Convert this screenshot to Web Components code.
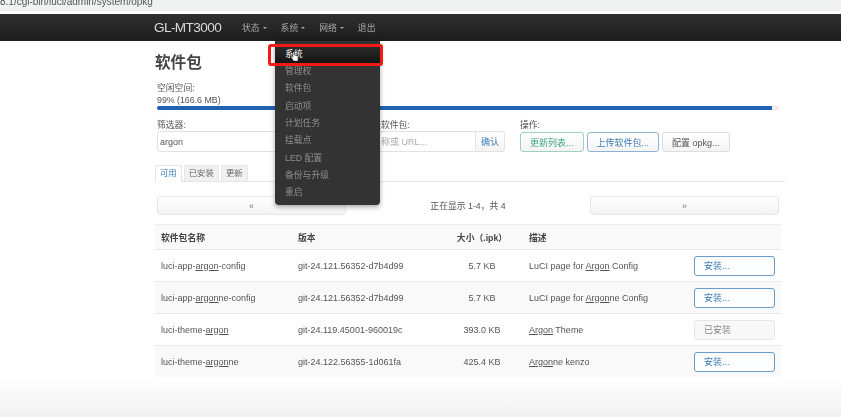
<!DOCTYPE html>
<html lang="zh">
<head>
<meta charset="utf-8">
<title>软件包</title>
<style>
  html, body { margin: 0; height: 100%; }
  body {
    width: 841px;
    height: 417px;
    overflow: hidden;
    font-family: "Liberation Sans", "Noto Sans CJK SC", sans-serif;
    font-size: 8.8px;
    color: #444;
    background: linear-gradient(#fff 376px, #f1f1f1 417px);
    filter: blur(0.3px);
  }
</style>
</head>
<body>
<url-bar>8.1/cgi-bin/luci/admin/system/opkg</url-bar>
<nav-bar brand="GL-MT3000"></nav-bar>
<pkg-page></pkg-page>

<script>
// small button used everywhere on the page
class UiButton extends HTMLElement {
  constructor() {
    super();
    this.attachShadow({ mode: 'open' }).innerHTML = `
      <style>
        :host {
          display: flex;
          box-sizing: border-box;
          align-items: center;
          justify-content: center;
          height: 20px;
          padding: 0 9px;
          border: 1px solid #dcdcdc;
          border-radius: 3px;
          background: linear-gradient(#fff, #f4f4f4);
          color: #555;
          white-space: nowrap;
        }
        :host([kind="add"]) { border-color: #9fd0c0; color: #3aa57e; }
        :host([kind="blue"]) { border-color: #8fb2d6; color: #3f7cb8; }
        :host([kind="install"]) { border-color: #6d9ac8; color: #3f7cb8; justify-content: flex-start; background: linear-gradient(#f8fbfe, #fff); }
        :host([kind="done"]) { border-color: #e6e6e6; color: #888; justify-content: flex-start; background: #f8f8f8; }
        :host([kind="plain"]) { border-color: #e6e6e6; color: #777; }
      </style>
      <slot></slot>`;
  }
}
customElements.define('ui-button', UiButton);

class UrlBar extends HTMLElement {
  constructor() {
    super();
    this.attachShadow({ mode: 'open' }).innerHTML = `
      <style>
        :host {
          display: flex;
          align-items: flex-end;
          height: 11px;
          margin-bottom: 3px;
          overflow: hidden;
          background: #f0f1f1;
          color: #555;
          font-size: 10px;
          line-height: 16px;
          white-space: nowrap;
        }
        div { margin-bottom: 1px; }
      </style>
      <div><slot></slot></div>`;
  }
}
customElements.define('url-bar', UrlBar);

// dropdown under the 系统 entry, the first line is the hovered one
class DropMenu extends HTMLElement {
  constructor() {
    super();
    const items = ['管理权', '软件包', '启动项', '计划任务', '挂载点', 'LED 配置', '备份与升级', '重启'];
    this.attachShadow({ mode: 'open' }).innerHTML = `
      <style>
        :host {
          position: absolute;
          left: 275px;
          top: 41px;
          width: 105px;
          height: 164px;
          box-sizing: border-box;
          padding-top: 4.500px;
          display: flex;
          flex-direction: column;
          background: #333;
          border-radius: 0 0 4px 4px;
          box-shadow: 0 2px 5px rgba(0,0,0,.35);
          color: #8e8e8e;
        }
        .item { height: 17.35px; line-height: 17.35px; padding-left: 10px; flex: none; }
        .hot { position: relative; color: #fff; background: linear-gradient(#2c2c2c, #141414); }
        .mark {
          position: absolute;
          left: -7px;
          top: 3px;
          width: 115px;
          height: 22px;
          box-sizing: border-box;
          border: 3px solid #f01c14;
          border-radius: 3px;
        }
        svg { position: absolute; left: 15px; top: 5px; }
      </style>
      <div class="item hot">系统
        <svg width="9" height="11" viewBox="0 0 9 11">
          <path d="M3 1v5L1.500 5 1 6l2.500 4H8V5L4.500 4V1z" fill="#fff" stroke="#222" stroke-width=".5"/>
        </svg>
      </div>
      ${items.map((t) => `<div class="item">${t}</div>`).join('')}
      <div class="mark"></div>`;
  }
}
customElements.define('drop-menu', DropMenu);

class NavBar extends HTMLElement {
  constructor() {
    super();
    this.attachShadow({ mode: 'open' });
  }

  connectedCallback() {
    const links = [['状态', 1], ['系统', 1], ['网络', 1], ['退出', 0]];
    this.shadowRoot.innerHTML = `
      <style>
        :host {
          display: flex;
          align-items: center;
          height: 27px;
          padding-left: 154px;
          background: linear-gradient(#303030, #1c1c1c);
          color: #a6a6a6;
        }
        .brand { width: 88px; color: #d8d8d8; font-size: 13.6px; letter-spacing: -.6px; }
        .link { display: flex; align-items: center; gap: 3px; margin-right: 14px; }
        .caret { border: 2.500px solid transparent; border-top-color: #a6a6a6; border-bottom: 0; }
      </style>
      <div class="brand">${this.getAttribute('brand')}</div>
      ${links.map(([t, c]) => `<div class="link">${t}${c ? '<span class="caret"></span>' : ''}</div>`).join('')}
      <drop-menu></drop-menu>`;
  }
}
customElements.define('nav-bar', NavBar);

// table head, same columns as the rows but without the button
class PkgHead extends HTMLElement {
  constructor() {
    super();
    this.attachShadow({ mode: 'open' }).innerHTML = `
      <style>
        :host {
          display: grid;
          grid-template-columns: 137px 142px 84px 170px;
          align-items: center;
          box-sizing: border-box;
          width: 626px;
          height: 25px;
          padding-left: 6px;
          border-top: 1px solid #ececec;
          background: #f9f9f9;
          font-weight: bold;
          color: #444;
        }
        .size { text-align: center; }
        .desc { padding-left: 5px; }
      </style>
      <div>软件包名称</div>
      <div>版本</div>
      <div class="size">大小（.ipk）</div>
      <div class="desc">描述</div>`;
  }
}
customElements.define('pkg-head', PkgHead);

// one line of the package table, name and description take marked-up text
class PkgRow extends HTMLElement {
  constructor() {
    super();
    this.attachShadow({ mode: 'open' });
  }

  connectedCallback() {
    const state = this.getAttribute('state');
    this.shadowRoot.innerHTML = `
      <style>
        :host {
          display: grid;
          grid-template-columns: 137px 142px 84px 170px 81px;
          align-items: center;
          box-sizing: border-box;
          width: 626px;
          height: 32px;
          padding-left: 6px;
          border-top: 1px solid #e9e9e9;
          color: #555;
          font-size: 9px;
        }
        :host([alt]) { background: #f9f9f9; }
        .size { text-align: center; }
        .desc { padding-left: 5px; }
        ui-button { padding-left: 9px; }
      </style>
      <div><slot name="name"></slot></div>
      <div>${this.getAttribute('version')}</div>
      <div class="size">${this.getAttribute('size')}</div>
      <div class="desc"><slot name="desc"></slot></div>
      <ui-button kind="${state}">${state === 'done' ? '已安装' : '安装...'}</ui-button>`;
  }
}
customElements.define('pkg-row', PkgRow);

class PkgPage extends HTMLElement {
  constructor() {
    super();
    this.attachShadow({ mode: 'open' }).innerHTML = `
      <style>
        :host { display: block; width: 630px; margin-left: 155px; }
        h1 { margin: 0; height: 42px; padding-top: 12px; box-sizing: border-box; font-size: 15.6px; line-height: 20px; color: #444; }
        .free { padding-left: 2px; line-height: 11.5px; color: #555; }
        .bar { display: flex; width: 622px; height: 4px; margin: 0 0 0 2px; border-radius: 2px; background: #f2f2f2; box-shadow: inset 0 0 0 1px #e4e4e4; }
        .bar i { width: 615px; background: #1f62b0; border-radius: 2px 0 0 2px; }
        .controls { display: grid; grid-template-columns: 170px 168px auto; column-gap: 10px; margin: 9px 0 0 2px; }
        .controls > div:last-child { margin-left: 5px; }
        label { display: block; height: 12px; line-height: 12px; color: #555; }
        .input { display: flex; box-sizing: border-box; height: 21px; align-items: center; padding-left: 2px; border: 1px solid #e2e2e2; border-radius: 3px; color: #555; background: #fff; font-size: 9px; }
        .group { display: flex; }
        .group .input { flex: 1; border-radius: 3px 0 0 3px; border-right: 0; color: #aaa; padding-left: 7px; min-width: 0; white-space: nowrap; overflow: hidden; }
        .group ui-button { height: 21px; padding: 0 5px; border-radius: 0 3px 3px 0; border-color: #e2e2e2; font-size: 9px; }
        .ops { display: flex; gap: 3px; margin-top: 1px; font-size: 9px; }
        .tabs { display: flex; gap: 2px; height: 17px; margin-top: 13px; box-sizing: border-box; border-bottom: 1px solid #e6e6e6; font-size: 8.4px; }
        .tab { height: 16px; padding: 0 4px; box-sizing: border-box; line-height: 15px; border: 1px solid #e6e6e6; border-bottom: 0; border-radius: 2px 2px 0 0; background: #f1f1f1; color: #666; }
        .tab.on { height: 17px; background: #fff; color: #3f7cb8; }
        .pager { display: grid; grid-template-columns: 189px 1fr 189px; align-items: center; width: 622px; margin: 14px 0 9px 2px; text-align: center; color: #555; }
        .pager ui-button { height: 19px; }
      </style>
      <h1>软件包</h1>
      <div class="free">空闲空间:<br>99% (166.6 MB)</div>
      <div class="bar"><i></i></div>
      <div class="controls">
        <div><label>筛选器:</label><div class="input">argon</div></div>
        <div>
          <label>下载并安装软件包:</label>
          <div class="group"><div class="input">软件包名称或 URL...</div><ui-button kind="blue">确认</ui-button></div>
        </div>
        <div>
          <label>操作:</label>
          <div class="ops">
            <ui-button kind="add">更新列表...</ui-button>
            <ui-button kind="blue">上传软件包...</ui-button>
            <ui-button>配置 opkg...</ui-button>
          </div>
        </div>
      </div>
      <div class="tabs"><div class="tab on">可用</div><div class="tab">已安装</div><div class="tab">更新</div></div>
      <div class="pager"><ui-button kind="plain">«</ui-button><div>正在显示 1-4，共 4</div><ui-button kind="plain">»</ui-button></div>
      <pkg-head></pkg-head>
      <slot></slot>`;
  }

  connectedCallback() {
    const pkgs = [
      ['luci-app-<u>argon</u>-config', 'git-24.121.56352-d7b4d99', '5.7 KB', 'LuCI page for <u>Argon</u> Config', 'install'],
      ['luci-app-<u>argon</u>ne-config', 'git-24.121.56352-d7b4d99', '5.7 KB', 'LuCI page for <u>Argon</u>ne Config', 'install'],
      ['luci-theme-<u>argon</u>', 'git-24.119.45001-960019c', '393.0 KB', '<u>Argon</u> Theme', 'done'],
      ['luci-theme-<u>argon</u>ne', 'git-24.122.56355-1d061fa', '425.4 KB', '<u>Argon</u>ne kenzo', 'install'],
    ];
    pkgs.forEach(([name, version, size, desc, state], i) => {
      const row = document.createElement('pkg-row');
      row.setAttribute('version', version);
      row.setAttribute('size', size);
      row.setAttribute('state', state);
      if (i % 2) row.setAttribute('alt', '');
      row.innerHTML = `<span slot="name">${name}</span><span slot="desc">${desc}</span>`;
      this.shadowRoot.appendChild(row);
    });
  }
}
customElements.define('pkg-page', PkgPage);
</script>
</body>
</html>
